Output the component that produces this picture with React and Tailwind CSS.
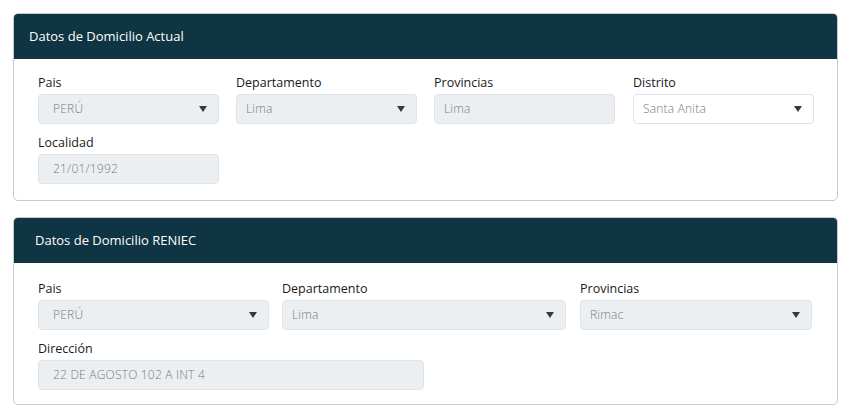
import React from "react";

const font = { fontFamily: '"Open Sans", "Noto Sans", sans-serif' };

function Arrow() {
  return (
    <svg width="8" height="6" viewBox="0 0 8 6" className="shrink-0">
      <path d="M0 0 L8 0 L4 6 Z" fill="#2f3b45" />
    </svg>
  );
}

function Field({ label, value, select, disabled = true, width, first }) {
  return (
    <div className={`flex flex-col ${width}`}>
      <label className="text-[12.5px] leading-[18px] text-[#1a1a1a] mb-[2px]">{label}</label>
      <div
        className={`h-[30px] rounded-[4px] border flex items-center justify-between pr-[11px] ${
          first ? "pl-[14px]" : "pl-[9px]"
        } ${disabled ? "bg-[#eceff1] border-[#dfe4e8]" : "bg-white border-[#dde3e8]"}`}
      >
        <span className="text-[12px] font-light text-[#7a7a7a] tracking-[0.2px]">{value}</span>
        {select && <Arrow />}
      </div>
    </div>
  );
}

export default function App() {
  return (
    <div className="min-h-screen bg-white pt-[13px] px-[13px] w-[850px]" style={font}>
      <div className="w-[825px] rounded-[5px] border border-[#c9c9c9] overflow-hidden">
        <div className="h-[45px] bg-[#0f3443] flex items-center pl-[15px]">
          <span className="text-white text-[13px]">Datos de Domicilio Actual</span>
        </div>
        <div className="pt-[15px] pb-[16px] pl-[24px] flex flex-col gap-[10px]">
          <div className="flex gap-[17px]">
            <Field label="Pais" value="PERÚ" select first width="w-[181px]" />
            <Field label="Departamento" value="Lima" select width="w-[181px]" />
            <Field label="Provincias" value="Lima" width="w-[181px]" />
            <div className="ml-[1px]">
              <Field label="Distrito" value="Santa Anita" select disabled={false} width="w-[181px]" />
            </div>
          </div>
          <div className="flex">
            <Field label="Localidad" value="21/01/1992" first width="w-[181px]" />
          </div>
        </div>
      </div>

      <div className="mt-[16px] w-[825px] rounded-[5px] border border-[#c9c9c9] overflow-hidden">
        <div className="h-[45px] bg-[#0f3443] flex items-center pl-[21px]">
          <span className="text-white text-[13px]">Datos de Domicilio RENIEC</span>
        </div>
        <div className="pt-[17px] pb-[14px] pl-[24px] flex flex-col gap-[10px]">
          <div className="flex">
            <Field label="Pais" value="PERÚ" select first width="w-[231px]" />
            <div className="ml-[13px]">
              <Field label="Departamento" value="Lima" select width="w-[284px]" />
            </div>
            <div className="ml-[14px]">
              <Field label="Provincias" value="Rimac" select width="w-[232px]" />
            </div>
          </div>
          <div className="flex">
            <Field label="Dirección" value="22 DE AGOSTO 102 A INT 4" first width="w-[386px]" />
          </div>
        </div>
      </div>
    </div>
  );
}
